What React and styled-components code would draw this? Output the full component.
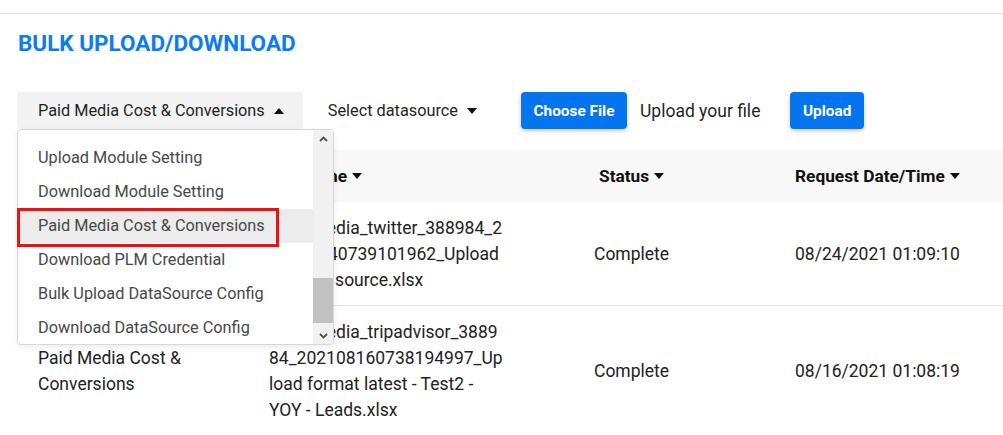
import React from "react";
import styled, { createGlobalStyle } from "styled-components";

const GlobalStyle = createGlobalStyle`
  body {
    margin: 0;
    background: #fff;
    font-family: Roboto, "Liberation Sans", Arial, sans-serif;
    color: #212121;
  }
`;

const Page = styled.div`
  overflow: hidden;
  min-height: 435px;
`;

const TopRule = styled.div`
  height: 13px;
  border-bottom: 1px solid #e2e2e2;
`;

const Title = styled.h1`
  margin: 16px 0 0 18px;
  font-size: 22.5px;
  line-height: 26px;
  font-weight: 700;
  color: #0c7cf2;
`;

const Toolbar = styled.div`
  display: flex;
  align-items: center;
  height: 37px;
  margin-top: 36px;
  padding-left: 17px;
`;

const DropWrap = styled.div`
  position: relative;
  margin-right: ${(p) => p.gap || 0}px;
`;

const Toggle = styled.button`
  display: flex;
  align-items: center;
  gap: 9px;
  height: 37px;
  padding: 0 19px 0 21px;
  border: none;
  border-radius: 4px;
  background: ${(p) => (p.open ? "#f3f3f3" : "transparent")};
  font: 16.3px Roboto, "Liberation Sans", sans-serif;
  color: #1f1f1f;
`;

const Caret = styled.span`
  width: 0;
  height: 0;
  border-left: 5.5px solid transparent;
  border-right: 5.5px solid transparent;
  ${(p) => (p.up ? "border-bottom: 6px solid #111;" : "border-top: 6px solid #111;")}
`;

const BlueButton = styled.button`
  height: 37px;
  padding: 0 12.5px;
  border: none;
  border-radius: 4px;
  background: #0475ee;
  color: #fff;
  font: 700 15.4px Roboto, "Liberation Sans", sans-serif;
  box-shadow: 0 2px 4px rgba(0, 0, 0, 0.22);
  margin-right: ${(p) => p.gap || 0}px;
`;

const Hint = styled.span`
  font-size: 17.5px;
  color: #1f1f1f;
  margin-right: 30px;
`;

const Menu = styled.div`
  position: absolute;
  top: 100%;
  left: 0;
  z-index: 5;
  display: flex;
  width: 317px;
  height: 216px;
  box-sizing: border-box;
  border: 1px solid #d8d8d8;
  border-radius: 4px;
  background: #fff;
  box-shadow: 0 2px 6px rgba(0, 0, 0, 0.08);
`;

const MenuList = styled.ul`
  flex: 1;
  margin: 0;
  padding: 11px 0 0;
  list-style: none;
`;

const MenuItem = styled.li`
  position: relative;
  height: 34px;
  line-height: 34px;
  padding-left: 20px;
  font-size: 16.3px;
  color: #474747;
  background: ${(p) => (p.active ? "#ececec" : "transparent")};
`;

const Marker = styled.span`
  position: absolute;
  top: -1px;
  left: -1px;
  z-index: 2;
  width: 262px;
  height: 39px;
  box-sizing: border-box;
  border: 3px solid #f01010;
`;

const Scrollbar = styled.div`
  display: flex;
  flex-direction: column;
  width: 20px;
  background: #f1f1f1;
  border-radius: 0 3px 3px 0;
`;

const ScrollArrow = styled.div`
  display: flex;
  align-items: center;
  justify-content: center;
  height: 17px;
`;

const ScrollTrack = styled.div`
  flex: 1;
  display: flex;
  flex-direction: column;
  justify-content: flex-end;
  padding-bottom: 4px;
`;

const Thumb = styled.div`
  height: 45px;
  background: #c1c1c1;
`;

const Table = styled.div`
  margin: 21px 0 0 17px;
`;

const Row = styled.div`
  display: grid;
  grid-template-columns: 231px 325px 201px 1fr;
  align-items: center;
  background: ${(p) => (p.head ? "#f8f8f8" : "transparent")};
  min-height: ${(p) => (p.head ? "52px" : "0")};
  border-bottom: ${(p) => (p.divider ? "1px solid #e4e4e4" : "none")};
`;

const HeadCell = styled.div`
  display: flex;
  align-items: center;
  gap: 5px;
  padding-left: ${(p) => 21 + (p.indent || 0)}px;
  font-size: 17.3px;
  font-weight: 700;
  color: #111;
`;

const Cell = styled.div`
  padding: 13px 21px 12px 21px;
  font-size: 17.5px;
  line-height: 26px;
  color: #222;
`;

const FileName = styled.div`
  width: 237px;
  overflow-wrap: anywhere;
`;

const Chevron = ({ up }) => (
  <svg width="9" height="6" viewBox="0 0 9 6">
    <polyline
      points={up ? "1,5 4.5,1.5 8,5" : "1,1 4.5,4.5 8,1"}
      fill="none"
      stroke="#505050"
      strokeWidth="1.8"
    />
  </svg>
);

const modules = [
  "Upload Module Setting",
  "Download Module Setting",
  "Paid Media Cost & Conversions",
  "Download PLM Credential",
  "Bulk Upload DataSource Config",
  "Download DataSource Config",
];

const uploads = [
  {
    module: "Paid Media Cost & Conversions",
    file: "Paid_Media_twitter_388984_202108240739101962_Upload format - source.xlsx",
    status: "Complete",
    date: "08/24/2021 01:09:10",
  },
  {
    module: "Paid Media Cost & Conversions",
    file: "Paid_Media_tripadvisor_388984_202108160738194997_Upload format latest - Test2 - YOY - Leads.xlsx",
    status: "Complete",
    date: "08/16/2021 01:08:19",
  },
];

export default function App() {
  const selected = "Paid Media Cost & Conversions";
  return (
    <Page>
      <GlobalStyle />
      <TopRule />
      <Title>BULK UPLOAD/DOWNLOAD</Title>

      <Toolbar>
        <DropWrap gap={4}>
          <Toggle open>
            {selected}
            <Caret up />
          </Toggle>
          <Menu>
            <MenuList>
              {modules.map((m) => (
                <MenuItem key={m} active={m === selected}>
                  {m}
                  {m === selected && <Marker />}
                </MenuItem>
              ))}
            </MenuList>
            <Scrollbar>
              <ScrollArrow>
                <Chevron up />
              </ScrollArrow>
              <ScrollTrack>
                <Thumb />
              </ScrollTrack>
              <ScrollArrow>
                <Chevron />
              </ScrollArrow>
            </Scrollbar>
          </Menu>
        </DropWrap>
        <DropWrap gap={25}>
          <Toggle>
            Select datasource
            <Caret />
          </Toggle>
        </DropWrap>
        <BlueButton gap={13}>Choose File</BlueButton>
        <Hint>Upload your file</Hint>
        <BlueButton>Upload</BlueButton>
      </Toolbar>

      <Table>
        <Row head>
          <HeadCell>
            Module Name <Caret />
          </HeadCell>
          <HeadCell>
            File Name <Caret />
          </HeadCell>
          <HeadCell indent={5}>
            Status <Caret />
          </HeadCell>
          <HeadCell>
            Request Date/Time <Caret />
          </HeadCell>
        </Row>
        {uploads.map((u, i) => (
          <Row key={u.date} divider={i < uploads.length - 1}>
            <Cell>{u.module}</Cell>
            <Cell>
              <FileName>{u.file}</FileName>
            </Cell>
            <Cell>{u.status}</Cell>
            <Cell>{u.date}</Cell>
          </Row>
        ))}
      </Table>
    </Page>
  );
}
